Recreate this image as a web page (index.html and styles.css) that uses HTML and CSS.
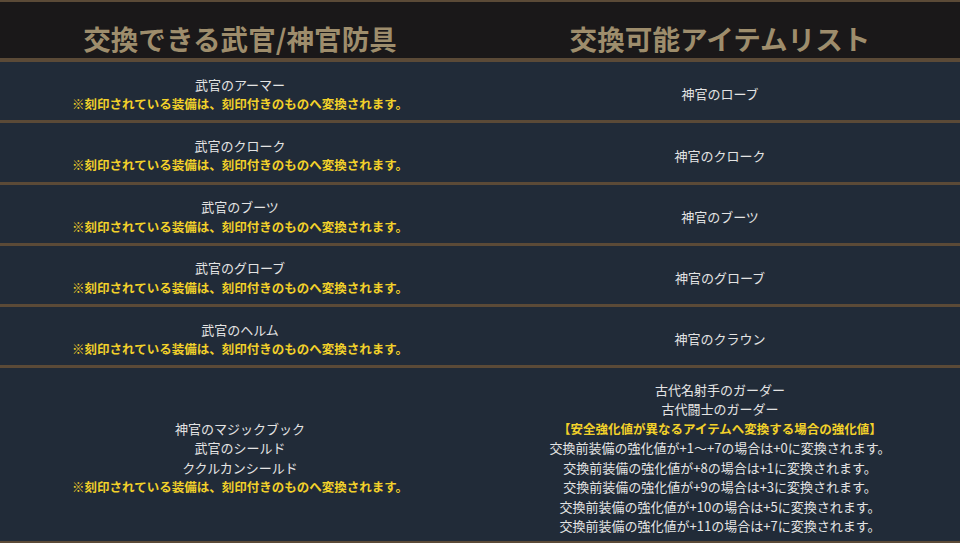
FILE: index.html
```html
<!DOCTYPE html>
<html lang="ja">
<head>
<meta charset="utf-8">
<title>交換リスト</title>
<link rel="stylesheet" href="styles.css">
</head>
<body>
<table class="xtable">
  <thead>
    <tr>
      <th>交換できる武官/神官防具</th>
      <th>交換可能アイテムリスト</th>
    </tr>
  </thead>
  <tbody>
    <tr>
      <td><div class="ln">武官のアーマー</div><div class="ln note">※刻印されている装備は、刻印付きのものへ変換されます。</div></td>
      <td><div class="ln">神官のローブ</div></td>
    </tr>
    <tr>
      <td><div class="ln">武官のクローク</div><div class="ln note">※刻印されている装備は、刻印付きのものへ変換されます。</div></td>
      <td><div class="ln">神官のクローク</div></td>
    </tr>
    <tr>
      <td><div class="ln">武官のブーツ</div><div class="ln note">※刻印されている装備は、刻印付きのものへ変換されます。</div></td>
      <td><div class="ln">神官のブーツ</div></td>
    </tr>
    <tr>
      <td><div class="ln">武官のグローブ</div><div class="ln note">※刻印されている装備は、刻印付きのものへ変換されます。</div></td>
      <td><div class="ln">神官のグローブ</div></td>
    </tr>
    <tr>
      <td><div class="ln">武官のヘルム</div><div class="ln note">※刻印されている装備は、刻印付きのものへ変換されます。</div></td>
      <td><div class="ln">神官のクラウン</div></td>
    </tr>
    <tr>
      <td>
        <div class="ln">神官のマジックブック</div>
        <div class="ln">武官のシールド</div>
        <div class="ln">ククルカンシールド</div>
        <div class="ln note">※刻印されている装備は、刻印付きのものへ変換されます。</div>
      </td>
      <td>
        <div class="ln">古代名射手のガーダー</div>
        <div class="ln">古代闘士のガーダー</div>
        <div class="ln note">【安全強化値が異なるアイテムへ変換する場合の強化値】</div>
        <div class="ln">交換前装備の強化値が+1～+7の場合は+0に変換されます。</div>
        <div class="ln">交換前装備の強化値が+8の場合は+1に変換されます。</div>
        <div class="ln">交換前装備の強化値が+9の場合は+3に変換されます。</div>
        <div class="ln">交換前装備の強化値が+10の場合は+5に変換されます。</div>
        <div class="ln">交換前装備の強化値が+11の場合は+7に変換されます。</div>
      </td>
    </tr>
  </tbody>
</table>
</body>
</html>
```

FILE: styles.css
```css
html, body {
  margin: 0;
  padding: 0;
  background: #212b38;
}

body {
  font-family: "Noto Sans CJK JP", "Noto Sans", sans-serif;
}

.xtable {
  width: 960px;
  border-collapse: collapse;
  table-layout: fixed;
  border-top: 2px solid #5b4a37;
}

.xtable th {
  width: 50%;
  background: #1a1819;
  color: #9e8d6c;
  font-size: 27.6px;
  font-weight: bold;
  line-height: 40px;
  height: 40px;
  padding: 16px 0 0 0;
  text-align: center;
  border-bottom: 4px solid #5b4a37;
}

.xtable td {
  background: #212b38;
  color: #e4e4e4;
  font-size: 13px;
  height: 41.25px;
  padding: 11.5px 0 5.5px;
  text-align: center;
  vertical-align: middle;
  border-bottom: 3px solid #5b4a37;
}

.ln {
  line-height: 19.5px;
  height: 19.5px;
  white-space: nowrap;
}

.note {
  color: #f2d12a;
  font-weight: bold;
  font-size: 12.5px;
}
```
